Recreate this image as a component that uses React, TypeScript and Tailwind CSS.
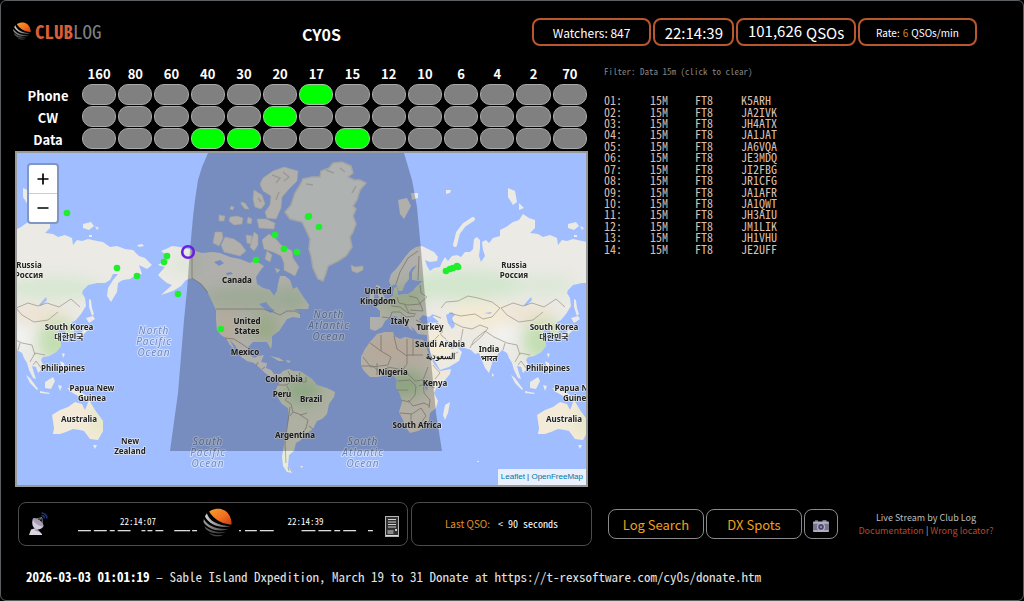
import React from "react";

const BANDS = ["160", "80", "60", "40", "30", "20", "17", "15", "12", "10", "6", "4", "2", "70"];
const MODES = [
  { name: "Phone", active: ["17"] },
  { name: "CW", active: ["20"] },
  { name: "Data", active: ["40", "30", "15"] },
];
const CALLS = [
  "K5ARH", "JA2IVK", "JH4ATX", "JA1JAT", "JA6VQA", "JE3MDQ", "JI2FBG",
  "JR1CFG", "JA1AFR", "JA1QWT", "JH3AIU", "JM1LIK", "JH1VHU", "JE2UFF",
];

const SANS = "font-['Noto_Sans_CJK_JP','Noto_Sans',sans-serif]";
const MONO = "font-['Noto_Sans_Mono_CJK_JP','Liberation_Mono',monospace]";

const EURASIA =
  "M389 281L391 274L396 269L400 264L405 257L410 251L416 247L422 246L428 249L434 252L438 257L437 261L430 262L425 260L427 266L430 271L434 268L440 267L442 262L445 257L448 261L452 256L457 255L461 257L465 252L470 252L473 249L474 239L477 237L480 240L480 248L479 256L481 262L485 256L483 250L482 242L486 240L489 243L493 238L500 236L500 230L506 227L513 222L519 220L523 214L529 218L535 220L535 228L530 233L538 234L543 237L550 235L557 238L558 245L562 240L567 241L573 239L582 241L588 242L595 247L602 246L610 249L618 250L624 256L630 258L637 265L632 269L624 265L627 274L620 276L615 279L608 280L603 283L602 292L596 302L592 296L593 288L598 280L603 274L598 274L595 280L590 283L582 283L573 285L568 290L567 293L570 298L571 306L566 314L561 320L556 323L559 330L558 335L553 336L549 329L544 329L543 333L546 339L546 341L546 346L541 352L534 356L528 357L526 360L529 367L523 373L521 367L517 366L519 373L521 379L518 378L514 370L512 363L509 358L507 353L502 350L497 355L493 360L491 367L489 373L485 368L481 358L479 353L475 354L471 350L465 348L457 346L452 343L445 339L448 346L452 349L457 347L462 352L459 361L449 367L440 370L436 363L431 354L427 344L427 335L418 334L414 329L411 326L413 331L409 328L407 322L401 316L399 314L403 320L407 324L404 327L401 321L396 316L390 317L385 321L382 327L375 331L370 329L370 317L380 317L380 311L376 307L384 302L388 299L393 296L394 288L397 287L398 295L408 294L413 291L415 288L423 281L412 280L412 272L417 265L412 268L409 273L409 279L405 284L402 291L399 291L396 284L391 286Z";
const AFRICA =
  "M377 334L385 332L393 332L394 336L400 339L405 337L414 339L423 340L426 347L430 357L434 364L440 371L451 369L450 374L445 380L437 387L434 393L438 401L436 408L430 413L429 420L425 427L418 431L410 433L407 429L403 420L399 412L402 402L400 394L396 387L397 380L394 376L386 375L378 377L370 377L364 371L361 366L361 357L365 349L370 342Z";
const NORTH_AMERICA =
  "M212 252L202 253L192 250L180 247L172 246L166 249L161 251L168 256L166 259L158 265L165 267L158 275L162 279L167 283L172 285L161 295L173 291L181 286L186 280L192 278L200 283L206 289L210 297L216 310L216 318L217 330L221 335L226 338L230 345L235 350L232 344L229 339L234 344L239 351L241 357L247 361L254 363L260 368L265 373L271 377L278 377L281 374L274 374L271 370L266 368L267 363L261 362L264 355L258 356L254 358L249 354L248 347L253 342L260 342L267 342L271 349L272 343L272 336L279 331L283 325L287 319L293 317L300 318L300 313L294 309L308 309L309 305L304 298L300 292L297 287L293 289L290 280L285 276L280 276L278 284L277 291L274 296L270 290L263 288L257 284L256 277L260 271L264 266L259 263L255 260L250 263L240 259L230 257L220 253Z";
const SOUTH_AMERICA =
  "M279 375L283 371L289 369L293 371L300 371L306 375L312 379L317 385L327 388L335 392L334 397L329 404L327 414L322 419L317 421L313 429L307 433L304 434L301 440L296 443L294 451L289 455L288 466L292 473L287 472L283 466L282 457L284 445L286 433L289 417L288 408L282 404L278 398L275 392L277 387L280 382Z";
const GREENLAND =
  "M333 163L342 162L351 166L353 173L348 177L354 180L360 180L366 183L360 190L357 200L353 206L356 209L353 216L356 224L353 232L350 237L352 247L346 256L338 261L328 266L326 273L323 281L318 279L313 268L311 256L309 249L310 239L306 230L302 222L290 219L285 212L291 205L295 193L300 185L303 179L312 177L320 177L321 171L329 168Z";
const AUSTRALIA =
  "M52 415L60 410L68 407L75 402L82 404L85 410L89 400L95 410L103 421L103 431L98 440L90 439L84 431L80 430L73 429L66 432L60 434L53 434L54 428Z";

function Asia() {
  return (
    <g>
      <path d={EURASIA} />
      <path d="M398 200l9 -2l4 8l-7 13l-4 -5zM411 193l7 0l0 5l-6 2zM446 190l5 0l-1 3l-4 1zM508 188l7 3l2 11l-4 3l-5 -8zM519 203l5 5l-5 2zM568 224l8 -2l3 4l-5 4l-6 -2zM580 226l4 2l-2 2zM574 235h3v2h-3z" />
      <path d="M473 219L464 225L458 233L455 245" fill="none" stroke="#ebeae5" strokeWidth="4" strokeLinecap="round" />
      <path d="M376 285l4 1l0 5l4 5l2 4l-10 3l3 -6l-3 -6zM370 294l4 0l0 6l-5 1z" />
      <path d="M574 299l2 1l1 8l2 6l-2 2l-3 -9zM571 318l7 -2l2 3l-6 4zM572 324l1 6l-5 5l-8 2l7 -5zM547 353l3 1l-2 4zM545 361l4 2l2 8l-3 1zM511 375l4 3l8 11l-1 1l-7 -7zM525 391l10 2l-1 1l-9 -1zM530 382l8 -5l2 4l-4 8l-6 -1zM543 385l4 1l-2 5zM552 388l8 1l9 5l5 6l-9 -3l-9 -5zM445 405l5 -3l-2 11l-3 7l-2 -5zM492 373l2 2l-2 2z" />
    </g>
  );
}

function Borders() {
  return (
    <g fill="none" stroke="#a39c90" strokeWidth=".8" strokeLinejoin="round">
      <path d="M419 256l-1 24M396 284l4 -12l8 -14l10 -7M420 285l1 8l6 4l-7 6l3 8l-13 -1M409 296l8 2l3 6l-12 1l-9 -2l-2 -6M388 300l4 6l8 1l8 6l8 1M382 317l8 1l2 -6l8 0l6 5l9 -1M405 305l4 8M416 320l6 3M436 323l7 3l-1 7M433 315l8 3M441 308l5 -6l12 -1l10 -5l10 2l14 4l8 6l-8 9l-9 2l-8 -5l-14 2l-12 -3M501 308l12 -5l10 3l9 -3l12 4l12 -8l9 8M501 308l6 7l12 7l14 -2l10 -8M427 329h11l4 7l4 3M427 343l7 -3l5 -5M432 355l10 3l9 -2l7 -4M452 322l10 5l10 2l8 -4l8 3l-6 8l-10 9M460 345l3 -16M470 348l4 -8l11 -9l9 6l13 6l10 2l3 10M503 350l2 -7M515 362l5 -9l10 2M518 365l3 -4l6 8" />
      <path d="M370 343l11 8l10 6l-3 8l-17 2l-8 -10M381 335v16M394 336l3 13l10 7v8l-6 8M407 339v17M423 355h-16M413 339v17M361 366h12l10 9M377 375v-12M387 375l1 -8l10 2l9 4l8 8l8 -1l5 -13M398 381l12 -1l6 6l-1 9l-6 7l-8 -2M397 390h11M423 379l1 14l6 7l-1 8M408 400l5 6l11 -3l6 3M400 413l12 1l9 -6l5 8l-9 12M411 414v7l-6 4M419 386l6 -2l10 4M418 424l3 3M433 365l7 8l-5 6" />
      <path d="M192 250v28l9 6l7 9M216 309h47l10 3l7 3l7 -4l8 0l6 3M225 338l9 1l8 5l7 5M258 362l-2 4M265 367l-3 2" />
      <path d="M288 371l4 8l-5 6l-9 0M300 372l-2 8l-6 1M306 377v5l-8 0M287 386l4 8l-6 6l6 4l2 8l6 2l9 6l-2 8l-4 6M290 407l-2 14l-3 22l1 20M293 412l-3 4M300 415l7 -2M309 426l4 3M288 467l1 4" />
    </g>
  );
}

const COUNTRIES: [number, number, string][] = [
  [29, 268, "Russia"], [29, 278, "Россия"], [514, 268, "Russia"], [514, 278, "Россия"],
  [69, 330, "South Korea"], [69, 340, "대한민국"], [554, 330, "South Korea"], [554, 340, "대한민국"],
  [63, 371, "Philippines"], [548, 371, "Philippines"],
  [92, 391, "Papua New"], [92, 401, "Guinea"], [577, 391, "Papua New"], [577, 401, "Guinea"],
  [79, 422, "Australia"], [564, 422, "Australia"],
  [130, 444, "New"], [130, 454, "Zealand"],
  [237, 283, "Canada"], [247, 324, "United"], [247, 334, "States"], [245, 355, "Mexico"],
  [284, 382, "Colombia"], [282, 397, "Peru"], [311, 402, "Brazil"], [295, 438, "Argentina"],
  [378, 294, "United"], [378, 304, "Kingdom"], [400, 324, "Italy"], [430, 330, "Turkey"],
  [440, 347, "Saudi Arabia"], [440, 359, "السعودية"], [489, 352, "India"], [489, 361, "भारत"],
  [393, 375, "Nigeria"], [435, 386, "Kenya"], [417, 428, "South Africa"],
];

const OCEANS: [number, number, string[]][] = [
  [154, 334, ["North", "Pacific", "Ocean"]],
  [329, 318, ["North", "Atlantic", "Ocean"]],
  [208, 445, ["South", "Pacific", "Ocean"]],
  [363, 445, ["South", "Atlantic", "Ocean"]],
];

const SPOTS: [number, number][] = [
  [67, 213], [117, 268], [137, 276], [167, 256], [164, 262], [178, 294], [275, 235], [284, 249],
  [297, 252], [256, 260], [309, 216], [308, 217], [319, 227], [221, 329], [446, 271], [450, 269],
  [453, 268], [457, 266], [458, 267],
];

function WorldMap() {
  return (
    <svg viewBox="17 153 569 332" preserveAspectRatio="xMidYMid slice" className="block h-full w-full bg-[#9fbdff]" role="img" aria-label="World map of watchers">
      <defs>
        <filter id="soft" x="-50%" y="-50%" width="200%" height="200%">
          <feGaussianBlur stdDeviation="7" />
        </filter>
        <clipPath id="land">
          <path d={EURASIA} />
          <path d={EURASIA} transform="translate(-485 0)" />
          <path d={AFRICA} />
          <path d={NORTH_AMERICA} />
          <path d={SOUTH_AMERICA} />
          <path d={AUSTRALIA} />
          <path d={AUSTRALIA} transform="translate(485 0)" />
        </clipPath>
      </defs>
      <g fill="#ebeae5">
        <Asia />
        <g transform="translate(-485 0)"><Asia /></g>
        <path d={AFRICA} fill="#efe8da" />
        <path d={NORTH_AMERICA} />
        <path d={SOUTH_AMERICA} fill="#e8ebd8" />
        <path d={AUSTRALIA} fill="#f3ead8" />
        <path d={AUSTRALIA} fill="#f3ead8" transform="translate(485 0)" />
        <path d={GREENLAND} fill="#e9efee" stroke="#dedbd6" strokeWidth="1.500" />
        <path d="M93 445l4 0l-2 4zM578 445l4 0l-2 4z" />
        <path d="M263 178l10 -7l11 -4l14 4l-1 10l-8 8l-7 8l-1 11l-5 11l-9 -1l-2 -6l5 -7l1 -9l-8 -5l-3 -7zM254 190l8 5l3 9l-4 5l-6 -2l-2 -8zM257 219l9 0l9 4l-1 6l-15 -1zM241 202l4 1l4 6l-4 0l-4 -5zM231 206l3 1l-1 3l-3 -1zM219 215l6 1l-1 5l-5 0zM230 217l7 -1l6 2l-1 6l-8 1l-5 -4zM248 217l4 2l-1 5l-4 -1zM215 232l7 0l1 6l-4 8l-6 -3zM225 237l9 2l7 5l5 7l-6 5l-16 -4l-3 -7zM246 235l6 1l-1 8l-4 -1zM254 232l4 3l0 10l-4 6l-4 -4zM262 240l7 -6l7 5l5 6l11 6l1 7l6 9l-4 9l-11 -6l0 -7l-3 -7l-8 -4l-9 -3zM267 251l5 4l-2 7l-5 -3zM275 268l5 2l-3 3zM351 265l4 2l8 -1l0 4l-6 3l-5 -2z" stroke="#d9d8d2" strokeWidth=".6" />
        <path d="M270 356l9 2l5 3l-5 0zM286 360l5 1l-3 2zM300 466l3 0l-1 2zM477 461h2v1h-2zM137 245l5 -1l2 2l-5 1z" />
        <path d="M272 175l8 3l-4 5M283 172l6 5l-5 4M258 198l3 4M279 192l-3 8M326 170l8 3M340 168l5 4M306 184l7 1M356 186l-4 7" fill="none" stroke="#cfcdc6" strokeWidth="1.500" />
      </g>
      <g clipPath="url(#land)">
        <g filter="url(#soft)">
          <ellipse cx="465" cy="285" rx="60" ry="15" fill="#cfe6cb" opacity=".9" />
          <ellipse cx="50" cy="288" rx="50" ry="10" fill="#cfe6cb" opacity=".8" />
          <ellipse cx="545" cy="285" rx="30" ry="10" fill="#d6e7d0" opacity=".7" />
          <ellipse cx="400" cy="300" rx="24" ry="14" fill="#cfe0b8" />
          <ellipse cx="543" cy="340" rx="20" ry="22" fill="#c3deb1" />
          <ellipse cx="58" cy="340" rx="20" ry="22" fill="#c3deb1" />
          <ellipse cx="480" cy="315" rx="34" ry="12" fill="#f4ead2" />
          <ellipse cx="530" cy="314" rx="24" ry="6" fill="#f0e0cc" />
          <ellipse cx="38" cy="314" rx="30" ry="6" fill="#f0e0cc" />
          <ellipse cx="438" cy="345" rx="16" ry="12" fill="#f7ecd0" />
          <ellipse cx="393" cy="350" rx="30" ry="13" fill="#f3e0cd" />
          <ellipse cx="406" cy="384" rx="20" ry="13" fill="#b9dba8" />
          <ellipse cx="303" cy="391" rx="18" ry="14" fill="#bfe0b2" />
          <ellipse cx="245" cy="298" rx="45" ry="12" fill="#d3e2c8" />
          <ellipse cx="185" cy="265" rx="16" ry="8" fill="#dde6d6" />
          <ellipse cx="292" cy="300" rx="16" ry="14" fill="#cfe2c4" />
          <ellipse cx="265" cy="328" rx="16" ry="14" fill="#cde2b4" />
          <ellipse cx="228" cy="328" rx="12" ry="18" fill="#f1e3cd" />
          <ellipse cx="98" cy="420" rx="5" ry="15" fill="#dbe6b9" />
          <ellipse cx="583" cy="420" rx="5" ry="15" fill="#dbe6b9" />
          <ellipse cx="503" cy="335" rx="14" ry="7" fill="#f4f5f4" />
          <ellipse cx="20" cy="337" rx="12" ry="8" fill="#f4f5f4" />
        </g>
      </g>
      <g fill="#9fbdff">
        <path d="M419 319l4 -4l6 2l4 -3l0 3l6 5l-7 1l-9 1zM446 315l6 -3l3 3l-3 3l3 8l-3 3l-4 -6zM259 304l7 -2l4 5l5 4l-5 2l-5 -4zM214 262l6 -2l4 3l-5 3zM226 273l5 -1l2 2l-6 1zM424 386l4 0l-1 5zM524 305l7 -8l1 3l-6 6zM39 305l7 -8l1 3l-6 6z" />
        <path d="M484 313l8 -1l-2 2z" />
      </g>
      <Borders />
      <g transform="translate(-485 0)"><Borders /></g>

      <g textAnchor="middle" strokeLinejoin="round" style={{ paintOrder: "stroke" }}>
        {OCEANS.map(([x, y, words]) =>
          words.map((word, i) => (
            <text key={word + x + y} x={x} y={y + i * 11} className="font-['Noto_Sans',sans-serif] text-[10px] tracking-widest italic" fill="#7289b8" stroke="#dfe9ff" strokeOpacity=".75" strokeWidth="2">
              {word}
            </text>
          )),
        )}
        {COUNTRIES.map(([x, y, name]) => (
          <text key={name + x} x={x} y={y} className="font-['Noto_Sans','Noto_Sans_CJK_KR','Open_Sans',sans-serif] text-[8px] font-bold" fill="#222" stroke="#f4f4ef" strokeOpacity=".75" strokeWidth="1.500">
            {name}
          </text>
        ))}
      </g>

      <path d="M208 153L202 167L198 180L195 200L193 217L190 250L187 290L184 320L178 393L170 451H442L436 413L430 350L425 297L421 250L417 207L412 180L404 153Z" fill="#000" opacity=".25" />
      {SPOTS.map(([x, y], i) => (
        <circle key={i} cx={x} cy={y} r="3.300" fill="#1fef2b" />
      ))}
      <circle cx="188" cy="252" r="5.800" fill="none" stroke="#6a1fe0" strokeWidth="2.600" />
    </svg>
  );
}

function Globe({ className, id }: { className: string; id: string }) {
  return (
    <svg viewBox="0 0 30 30" className={className} aria-hidden="true">
      <defs>
        <linearGradient id={id + "o"} x1="0" y1="0" x2="1" y2="1">
          <stop offset="0" stopColor="#f9a02c" />
          <stop offset=".55" stopColor="#f2701f" />
          <stop offset="1" stopColor="#cc3a17" />
        </linearGradient>
        <linearGradient id={id + "g"} x1="0" y1="0" x2="1" y2="0">
          <stop offset="0" stopColor="#d2d2d2" />
          <stop offset=".5" stopColor="#909090" />
          <stop offset="1" stopColor="#4c4c4c" />
        </linearGradient>
      </defs>
      <path d="M6.500 3.500C11 .3 18 -.5 23 2.800C27 5.800 30 11 29.500 17C24 17 17 14.500 13 11C10 8.500 7.500 6 6.500 3.500Z" fill={`url(#${id}o)`} />
      <path d="M4 5.500C6 13 15 18.500 28.500 18.800C19 21.500 6 17.500 2 8.500Z" fill={`url(#${id}g)`} />
      <path d="M.8 11.500C5 19 16 23 27 21.500C18 25.500 5 22.500 .5 14.500Z" fill={`url(#${id}g)`} opacity=".75" />
      <path d="M1.500 18.500C7 24 17 26 24.500 24.300C18 28 7 26.500 2.800 21.500Z" fill={`url(#${id}g)`} opacity=".5" />
      <path d="M6 25.500C11 28 17 28.500 21.500 27.300C17 30.500 10 30 6 25.500Z" fill="#444" />
    </svg>
  );
}

function Dish() {
  return (
    <svg viewBox="0 0 22 24" className="h-6 w-[22px] shrink-0" aria-hidden="true">
      <path d="M4 17.500l5 -1.500l6 6v1H2z" fill="#d9d3e2" />
      <path d="M7 18l3 -1l2 3z" fill="#9c93aa" />
      <path d="M6 6.500C4 12 6 17 10.500 17.500C13.500 17.500 15.500 16 16.500 14Z" fill="#d2cbdc" />
      <ellipse cx="11.200" cy="10.300" rx="6.500" ry="2.400" transform="rotate(36 11.200 10.300)" fill="#a79fb5" />
      <path d="M11 10l3.500 -4.500M7 7.500l8 -2M15.500 13l-.5 -7" stroke="#999" strokeWidth=".8" fill="none" />
      <path d="M14.500 3.500a3 3 0 0 1 3 3M14.500 1a5.500 5.500 0 0 1 5.500 5.500" stroke="#1f3575" strokeWidth="1.500" fill="none" />
    </svg>
  );
}

function Receiver() {
  return (
    <svg viewBox="0 0 14 21" className="mt-1 h-[21px] w-[14px] shrink-0" aria-hidden="true">
      <rect x=".5" y=".5" width="13" height="20" fill="#333" stroke="#b5b5b5" />
      <path d="M3 3.500h8M3 6h8M3 8.500h8M3 11h8" stroke="#cfcfcf" strokeWidth="1.200" />
      <path d="M2.500 14h6v4h-6z" fill="#888" />
      <circle cx="11" cy="14" r="1" fill="#fff" />
      <path d="M1 19.500h12" stroke="#ddd" />
    </svg>
  );
}

function Camera() {
  return (
    <svg viewBox="0 0 16 12" className="h-3 w-4" aria-hidden="true">
      <path d="M2 .3h3v1.500H2zM9.500 0h4v2h-4z" fill="#77758a" />
      <rect x="0" y="1.500" width="16" height="10.500" rx="1" fill="#b4b1c6" />
      <rect x="0" y="3.700" width="16" height="6.500" fill="#77758c" />
      <circle cx="8" cy="6.900" r="4" fill="#b8b5cc" />
      <circle cx="8" cy="6.900" r="2.800" fill="#464766" />
      <circle cx="8" cy="6.900" r="1.200" fill="#8a8db5" />
    </svg>
  );
}

function Lane({ time, dashes, span, className }: { time: string; dashes: [number, number][]; span: number; className: string }) {
  return (
    <div className={className}>
      <time className={`${MONO} text-[9px] leading-[12px] text-white`}>{time}</time>
      <svg viewBox={`0 0 ${span} 2`} className="mt-[2px] h-[2px] w-full" aria-hidden="true">
        {dashes.map(([x, w]) => (
          <rect key={x} x={x} y="0" width={w} height="1.300" fill="#ddd" />
        ))}
      </svg>
    </div>
  );
}

function Badge({ className, children }: { className: string; children: React.ReactNode }) {
  return (
    <div className={`flex h-[28px] items-center justify-center rounded-lg border-2 border-[#b9572f] pt-[2px] whitespace-nowrap ${className}`}>
      {children}
    </div>
  );
}

export default function App() {
  return (
    <div className={`min-h-screen bg-black text-white ${SANS}`}>
      <main className="flex min-h-screen flex-col rounded-md border border-[#5c5f61] pr-[9px] pl-[14px]">
        <header className="grid grid-cols-[573fr_426fr] pt-[17px]">
          <div className="grid grid-cols-3">
            <a href="#home" className="-ml-[2px] flex items-center gap-1 pb-[2px]" aria-label="Club Log">
              <Globe id="logo" className="h-[18px] w-[18px]" />
              <span className={`${MONO} text-[19px] leading-6 text-[#7d8084]`}>
                <b className="text-[#d95f37]">CLUB</b>LOG
              </span>
            </a>
            <h1 className="flex items-center justify-center pt-1 pl-[40px] text-base leading-5 font-bold">CY0S</h1>
          </div>
          <div className="-ml-[56px] grid grid-cols-[119fr_81fr_119fr_119fr] gap-[2px] pr-[37px]">
            <Badge className="text-xs leading-4">Watchers: 847</Badge>
            <Badge className="text-[15px] leading-5">22:14:39</Badge>
            <Badge className="gap-1 text-[15px] leading-5">
              <span className="pb-1">101,626</span> <span>QSOs</span>
            </Badge>
            <Badge className="gap-[3px] text-[10px] leading-4">
              <span>Rate:</span>
              <span className="text-[#d9860f]">6</span>
              <span>QSOs/min</span>
            </Badge>
          </div>
        </header>

        <div className="grid grid-cols-[573fr_426fr] pt-[20px]">
          <section>
            <table className="w-full table-fixed border-collapse text-center text-[13px] font-bold">
              <thead>
                <tr className="h-[18px] leading-4">
                  <th className="w-[66px]" />
                  {BANDS.map((band) => (
                    <th key={band} scope="col" className="p-0 align-top">{band}</th>
                  ))}
                </tr>
              </thead>
              <tbody>
                {MODES.map((mode) => (
                  <tr key={mode.name} className="h-[22px]">
                    <th scope="row" className="p-0 pt-[2px] leading-5">{mode.name}</th>
                    {BANDS.map((band) => (
                      <td key={band} className="px-[1px] py-0 align-top">
                        <button
                          type="button"
                          aria-label={`${mode.name} ${band}`}
                          className={
                            mode.active.includes(band)
                              ? "block h-[21px] w-full rounded-[10px] border border-[#a5c9a5] bg-[#00ff00]"
                              : "block h-[21px] w-full rounded-[10px] border border-[#a9a9a9] bg-[#808080]"
                          }
                        />
                      </td>
                    ))}
                  </tr>
                ))}
              </tbody>
            </table>
            <div className="relative mt-[1px] aspect-[573/336] w-full overflow-hidden border-2 border-[#999]">
              <WorldMap />
              <div className="absolute top-[10px] left-[10px] flex w-[32px] flex-col overflow-hidden rounded border-2 border-[#8096c4] bg-white font-['Liberation_Sans',sans-serif] text-black">
                <button type="button" aria-label="Zoom in" className="flex h-[29px] items-center justify-center border-b border-[#ccc]">
                  <svg viewBox="0 0 12 12" className="h-3 w-3"><path d="M6 .5v11M.5 6h11" stroke="#000" strokeWidth="1.700" /></svg>
                </button>
                <button type="button" aria-label="Zoom out" className="flex h-[28px] items-center justify-center">
                  <svg viewBox="0 0 12 12" className="h-3 w-3"><path d="M.5 6h11" stroke="#000" strokeWidth="1.500" /></svg>
                </button>
              </div>
              <div className="absolute right-0 bottom-0 bg-[#e9effc] px-[3px] font-['Liberation_Sans',sans-serif] text-[8px] leading-4 text-[#333]">
                <a href="#leaflet" className="text-[#0078a8]">Leaflet</a> | <a href="#openfreemap" className="text-[#0078a8]">OpenFreeMap</a>
              </div>
            </div>
          </section>

          <section className={`${MONO} pl-[16px]`}>
            <button type="button" className="block text-[9px] leading-[12px] text-[#858585]">Filter: Data 15m (click to clear)</button>
            <table className="mt-[16px] h-[160px] border-collapse text-left text-[12px] leading-[11px] text-[#dcbfae]">
              <tbody>
                {CALLS.map((call, i) => (
                  <tr key={call}>
                    <td className="w-[46px] p-0">{String(i + 1).padStart(2, "0")}:</td>
                    <td className="w-[45px] p-0">15M</td>
                    <td className="w-[46px] p-0">FT8</td>
                    <td className="p-0">{call}</td>
                  </tr>
                ))}
              </tbody>
            </table>
          </section>
        </div>

        <section className="grid grid-cols-[574fr_406fr] gap-[16px] pt-[15px] pl-[3px]">
          <div className="grid grid-cols-[390fr_181fr] gap-[3px]">
            <div className="flex h-[44px] items-center rounded-lg border border-[#4b4b4b] px-2">
              <Dish />
              <Lane
                className="mr-[4px] ml-[28px] flex flex-[123] flex-col items-center"
                time="22:14:07"
                span={123}
                dashes={[[1, 13], [17, 13], [33, 5], [41, 13], [65, 4], [71, 5], [79, 8], [98, 12], [110, 4], [116, 5]]}
              />
              <Globe id="relay" className="mb-[3px] h-[29px] w-[29px] shrink-0" />
              <Lane
                className="mr-[12px] ml-[6px] flex flex-[136] flex-col items-center"
                time="22:14:39"
                span={136}
                dashes={[[1, 2], [7, 12], [22, 14], [64, 14], [81, 13], [97, 6], [106, 13], [131, 5]]}
              />
              <Receiver />
            </div>
            <div className="flex h-[44px] items-center justify-center gap-2 rounded-lg border border-[#4b4b4b] text-[10px] leading-4">
              <span className="text-[#e0912a]">Last QSO:</span>
              <span className={MONO}>&lt; 90 seconds</span>
            </div>
          </div>
          <div className="flex items-center">
            <div className="grid flex-[230] grid-cols-[96fr_96fr_34fr] gap-[2px] text-[13px] leading-5 text-[#f0a01e]">
              <button type="button" className="h-[30px] rounded-lg border border-[#8a8a8a] pt-[2px]">Log Search</button>
              <button type="button" className="h-[30px] rounded-lg border border-[#8a8a8a] pt-[2px]">DX Spots</button>
              <button type="button" aria-label="Screenshot" className="flex h-[30px] items-center justify-center rounded-lg border border-[#8a8a8a] pt-1">
                <Camera />
              </button>
            </div>
            <div className="flex-[176] text-center text-[9px] leading-[13px] text-[#bdbdbd]">
              <p>Live Stream by Club Log</p>
              <p>
                <a href="#documentation" className="text-[#b8472a]">Documentation</a> | <a href="#locator" className="text-[#b8472a]">Wrong locator?</a>
              </p>
            </div>
          </div>
        </section>

        <p className={`${MONO} pt-[21px] pl-[11px] text-[13px] leading-5 text-[#e4e4e4]`}>
          <b className="text-white">2026-03-03 01:01:19</b> – Sable Island Dxpedition, March 19 to 31 Donate at https://t-rexsoftware.com/cy0s/donate.htm
        </p>
      </main>
    </div>
  );
}
